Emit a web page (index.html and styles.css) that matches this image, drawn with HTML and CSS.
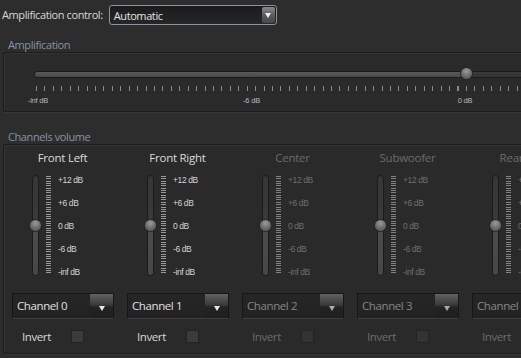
FILE: index.html
```html
<!DOCTYPE html>
<html lang="en">
<head>
    <meta charset="UTF-8">
    <title>Amplification</title>
    <link rel="stylesheet" href="styles.css">
</head>
<body>
<div class="page">
    <div class="top-row">
        <span class="top-label">Amplification control:</span>
        <div class="combo-main">
            <span class="combo-text">Automatic</span>
            <span class="main-btn"><i class="arrow"></i></span>
        </div>
    </div>

    <div class="group">
        <div class="group-title">Amplification</div>
        <div class="group-box amp-box">
            <div class="htrack">
                <div class="hfill" style="width: 431px;"></div>
                <span class="hhandle" style="left: 425px;"></span>
            </div>
            <div class="hticks"></div>
            <div class="hlabels">
                <span>-inf dB</span>
                <span>-6 dB</span>
                <span>0 dB</span>
                <span>+6 dB</span>
            </div>
        </div>
    </div>

    <div class="group">
        <div class="group-title channels-title">Channels volume</div>
        <div class="group-box channels">
            <div class="channel">
                <div class="ch-title">Front Left</div>
                <div class="vslider">
                    <div class="vtrack"><span class="vhandle"></span></div>
                    <div class="vticks"></div>
                    <div class="vlabels"><span>+12 dB</span><span>+6 dB</span><span>0 dB</span><span>-6 dB</span><span>-inf dB</span></div>
                </div>
                <div class="combo-ch"><span class="combo-text">Channel 0</span><span class="ch-btn"><i class="arrow"></i></span></div>
                <div class="invert"><span>Invert</span><span class="check"></span></div>
            </div>
            <div class="channel">
                <div class="ch-title">Front Right</div>
                <div class="vslider">
                    <div class="vtrack"><span class="vhandle"></span></div>
                    <div class="vticks"></div>
                    <div class="vlabels"><span>+12 dB</span><span>+6 dB</span><span>0 dB</span><span>-6 dB</span><span>-inf dB</span></div>
                </div>
                <div class="combo-ch"><span class="combo-text">Channel 1</span><span class="ch-btn"><i class="arrow"></i></span></div>
                <div class="invert"><span>Invert</span><span class="check"></span></div>
            </div>
            <div class="channel disabled">
                <div class="ch-title">Center</div>
                <div class="vslider">
                    <div class="vtrack"><span class="vhandle"></span></div>
                    <div class="vticks"></div>
                    <div class="vlabels"><span>+12 dB</span><span>+6 dB</span><span>0 dB</span><span>-6 dB</span><span>-inf dB</span></div>
                </div>
                <div class="combo-ch"><span class="combo-text">Channel 2</span><span class="ch-btn"><i class="arrow"></i></span></div>
                <div class="invert"><span>Invert</span><span class="check"></span></div>
            </div>
            <div class="channel disabled">
                <div class="ch-title">Subwoofer</div>
                <div class="vslider">
                    <div class="vtrack"><span class="vhandle"></span></div>
                    <div class="vticks"></div>
                    <div class="vlabels"><span>+12 dB</span><span>+6 dB</span><span>0 dB</span><span>-6 dB</span><span>-inf dB</span></div>
                </div>
                <div class="combo-ch"><span class="combo-text">Channel 3</span><span class="ch-btn"><i class="arrow"></i></span></div>
                <div class="invert"><span>Invert</span><span class="check"></span></div>
            </div>
            <div class="channel disabled">
                <div class="ch-title">Rear Left</div>
                <div class="vslider">
                    <div class="vtrack"><span class="vhandle"></span></div>
                    <div class="vticks"></div>
                    <div class="vlabels"><span>+12 dB</span><span>+6 dB</span><span>0 dB</span><span>-6 dB</span><span>-inf dB</span></div>
                </div>
                <div class="combo-ch"><span class="combo-text">Channel 4</span><span class="ch-btn"><i class="arrow"></i></span></div>
                <div class="invert"><span>Invert</span><span class="check"></span></div>
            </div>
        </div>
    </div>
</div>
</body>
</html>
```

FILE: styles.css
```css
html, body {
    margin: 0;
    padding: 0;
    width: 521px;
    height: 358px;
    overflow: hidden;
    background-color: #2d2d2d;
}
body {
    font-family: 'Open Sans', sans-serif;
    font-size: 11px;
    letter-spacing: -0.4px;
    color: #d8d8d8;
}
.page {
    width: 640px;
}

/* top line */
.top-row {
    display: flex;
    align-items: center;
    padding: 5px 0 0 2px;
    height: 20px;
}
.top-label {
    line-height: 20px;
}
.combo-main {
    margin-left: 6px;
    width: 168px;
    height: 20px;
    box-sizing: border-box;
    border: 1px solid #8796a6;
    border-radius: 3px;
    background: linear-gradient(#1b1b1b, #262626);
    display: flex;
    align-items: center;
    padding-left: 4px;
    color: #e4e4e4;
}
.combo-main .combo-text {
    flex: 1;
}
.main-btn {
    width: 13px;
    height: 16px;
    margin-right: 1px;
    border-radius: 2px;
    background: linear-gradient(#8a8a8a, #555 60%, #4a4a4a);
    display: flex;
    align-items: center;
    justify-content: center;
}
.arrow {
    display: block;
    width: 0;
    height: 0;
    border-left: 3.5px solid transparent;
    border-right: 3.5px solid transparent;
    border-top: 5px solid #f0f0f0;
}

/* group boxes */
.group-title {
    margin-left: 8px;
    margin-top: 13px;
    line-height: 14px;
    color: #8594a6;
}
.channels-title {
    margin-top: 18px;
}
.group-box {
    margin-left: 3px;
    border: 1px solid #1c1c1c;
    border-right: none;
    border-radius: 3px 0 0 3px;
    background-color: #2a2a2a;
    box-shadow: inset 1px 1px 0 rgba(255, 255, 255, 0.05), 0 1px 0 rgba(255, 255, 255, 0.05);
}

/* amplification slider */
.amp-box {
    padding: 18px 0 5px 30px;
}
.htrack {
    position: relative;
    height: 7px;
    box-sizing: border-box;
    border: 1px solid #1b1b1b;
    border-radius: 4px 0 0 4px;
    background: linear-gradient(#3a3a3a, #333);
}
.hfill {
    height: 100%;
    border-radius: 3px 0 0 3px;
    background: linear-gradient(#5a5a5a, #474747);
}
.hhandle {
    position: absolute;
    top: -5px;
    width: 13px;
    height: 13px;
    box-sizing: border-box;
    border-radius: 50%;
    border: 1px solid #262626;
    background: radial-gradient(circle at 50% 30%, #9a9a9a, #6a6a6a 55%, #4e4e4e);
}
.hticks {
    margin: 8px 0 0 2px;
    height: 5px;
    background: repeating-linear-gradient(to right, #8a8a8a 0, #8a8a8a 1px, transparent 1px, transparent 8.43px);
}
.hlabels {
    display: flex;
    gap: 173.5px;
    margin: 5px 0 0 -16px;
    font-family: 'Liberation Sans', Arial, sans-serif;
    font-size: 7.5px;
    line-height: 10px;
    color: #b8b8b8;
    letter-spacing: -0.2px;
}
.hlabels span {
    flex-shrink: 0;
    width: 40px;
    text-align: center;
}

/* channels */
.channels {
    display: flex;
    padding: 5px 0 10px 2px;
}
.channel {
    width: 115px;
    flex-shrink: 0;
}
.ch-title {
    width: 113px;
    text-align: center;
    line-height: 16px;
    font-size: 11.5px;
    letter-spacing: -0.25px;
    color: #dcdcdc;
}
.vslider {
    display: flex;
    height: 102px;
    margin-top: 9px;
    padding-left: 26px;
}
.vtrack {
    position: relative;
    width: 7px;
    height: 101px;
    box-sizing: border-box;
    border: 1px solid #1b1b1b;
    border-radius: 4px;
    background: linear-gradient(#363636, #3a3a3a 50%, #4c4c4c 50%, #474747);
}
.vhandle {
    position: absolute;
    left: -4px;
    top: 43px;
    width: 13px;
    height: 13px;
    box-sizing: border-box;
    border-radius: 50%;
    border: 1px solid #262626;
    background: radial-gradient(circle at 50% 30%, #9a9a9a, #6a6a6a 55%, #4e4e4e);
}
.vticks {
    margin: 1px 0 0 7px;
    width: 5px;
    height: 98px;
    background: repeating-linear-gradient(#9a9a9a 0, #9a9a9a 1px, transparent 1px, transparent 2.35px);
}
.vlabels {
    display: flex;
    flex-direction: column;
    justify-content: space-between;
    margin-left: 7px;
    font-family: 'Liberation Sans', Arial, sans-serif;
    font-size: 8.5px;
    line-height: 10px;
    letter-spacing: -0.4px;
    color: #d4d4d4;
}
.combo-ch {
    display: flex;
    margin: 16px 0 0 6px;
    width: 102px;
    height: 26px;
    box-sizing: border-box;
    border: 1px solid #161616;
    border-bottom-color: #3e3e3e;
    background: linear-gradient(#262626, #222);
}
.combo-ch .combo-text {
    flex: 1;
    padding-left: 4px;
    line-height: 24px;
    font-size: 11.5px;
    letter-spacing: -0.4px;
    color: #e0e0e0;
}
.ch-btn {
    width: 23px;
    display: flex;
    justify-content: center;
    padding-top: 12px;
    box-sizing: border-box;
    background: linear-gradient(#626262, #3a3a3a 45%, #232323 55%, #1f1f1f);
}
.ch-btn .arrow {
    border-top-color: #e8e8e8;
}
.invert {
    display: flex;
    align-items: center;
    margin: 10px 0 0 16px;
    height: 14px;
    font-size: 11.5px;
}
.invert span:first-child {
    width: 49px;
}
.check {
    width: 13px;
    height: 13px;
    box-sizing: border-box;
    border: 1px solid #232323;
    background: #3b3b3b;
}

/* disabled channels */
.disabled .ch-title,
.disabled .invert {
    color: #6c6c6c;
}
.disabled .vlabels {
    color: #6e6e6e;
}
.disabled .combo-ch .combo-text {
    color: #868686;
}
.disabled .vticks {
    opacity: 0.8;
}
.disabled .ch-btn .arrow {
    border-top-color: #aaa;
}
.disabled .check {
    background: #333;
}
```
